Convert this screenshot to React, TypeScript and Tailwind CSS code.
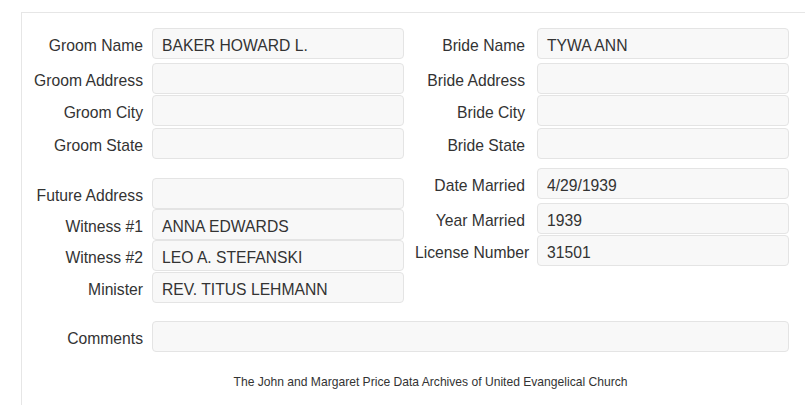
import clsx from 'clsx';

type FieldProps = {
  label: string;
  value?: string;
  side: 'left' | 'right';
  className?: string;
};

function Field({ label, value = '', side, className }: Readonly<FieldProps>) {
  return (
    <div className={clsx('flex h-[31px] items-center', className)}>
      <label className="w-[110px] shrink-0 whitespace-nowrap pt-[4px] text-right text-[15.7px] text-[#333]">
        {label}
      </label>
      <div
        className={clsx(
          'flex h-full w-[252px] items-center rounded-[4px] border border-[#e4e4e4] bg-[#f8f8f8] pl-[9px] pt-[4px] text-[15.7px] text-[#333]',
          side === 'left' ? 'ml-[9px]' : 'ml-[12px]'
        )}
      >
        {value}
      </div>
    </div>
  );
}

export default function App() {
  return (
    <div
      className="h-[405px] w-[805px] overflow-hidden bg-white"
      style={{ fontFamily: '"Liberation Sans", Arial, sans-serif' }}
    >
      <div className="ml-[21px] mt-[12px] h-[420px] w-[818px] border-t border-l border-[#e6e6e6] pt-[15px]">
        <div className="flex">
          <div className="ml-[11px] flex flex-col">
            <Field side="left" label="Groom Name" value="BAKER HOWARD L." />
            <Field side="left" label="Groom Address" className="mt-[4px]" />
            <Field side="left" label="Groom City" className="mt-[1px]" />
            <Field side="left" label="Groom State" className="mt-[2px]" />
            <Field side="left" label="Future Address" className="mt-[19px]" />
            <Field side="left" label="Witness #1" value="ANNA EDWARDS" />
            <Field side="left" label="Witness #2" value="LEO A. STEFANSKI" />
            <Field side="left" label="Minister" value="REV. TITUS LEHMANN" className="mt-[1px]" />
          </div>
          <div className="ml-[11px] flex flex-col">
            <Field side="right" label="Bride Name" value="TYWA ANN" />
            <Field side="right" label="Bride Address" className="mt-[4px]" />
            <Field side="right" label="Bride City" className="mt-[1px]" />
            <Field side="right" label="Bride State" className="mt-[2px]" />
            <Field side="right" label="Date Married" value="4/29/1939" className="mt-[9px]" />
            <Field side="right" label="Year Married" value="1939" className="mt-[4px]" />
            <Field side="right" label="License Number" value="31501" className="mt-[1px]" />
          </div>
        </div>

        <div className="ml-[11px] mt-[18px] flex h-[31px] items-center">
          <label className="w-[110px] shrink-0 pt-[4px] text-right text-[15.7px] text-[#333]">
            Comments
          </label>
          <div className="ml-[9px] h-full w-[637px] rounded-[4px] border border-[#e4e4e4] bg-[#f8f8f8]" />
        </div>

        <p className="mt-[22px] text-center text-[12.1px] leading-[17px] text-[#333]">
          The John and Margaret Price Data Archives of United Evangelical Church
        </p>
      </div>
    </div>
  );
}
